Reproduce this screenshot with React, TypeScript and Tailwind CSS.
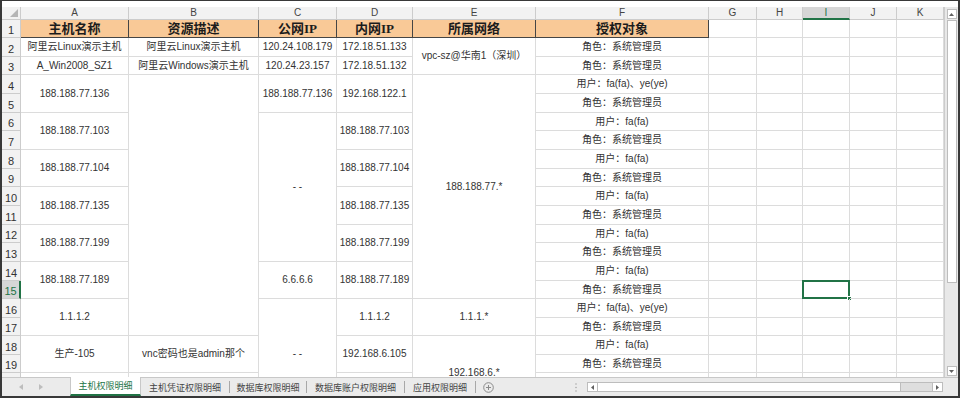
import React from "react";

// literal lookup tables so tailwind sees every class
const ROW = [
  "",
  "row-start-1",
  "row-start-2",
  "row-start-3",
  "row-start-4",
  "row-start-5",
  "row-start-6",
  "row-start-7",
  "row-start-8",
  "row-start-9",
  "row-start-10",
  "row-start-11",
  "row-start-12",
  "row-start-13",
  "row-start-14",
  "row-start-15",
  "row-start-16",
  "row-start-17",
  "row-start-18",
  "row-start-19",
  "row-start-20",
  "row-start-21",
  "row-start-22",
];
const COL = [
  "",
  "col-start-1",
  "col-start-2",
  "col-start-3",
  "col-start-4",
  "col-start-5",
  "col-start-6",
  "col-start-7",
  "col-start-8",
  "col-start-9",
  "col-start-10",
  "col-start-11",
  "col-start-12",
];
const SPAN: Record<number, string> = {
  1: "",
  2: "row-span-2",
  4: "row-span-4",
  6: "row-span-6",
  8: "row-span-8",
  12: "row-span-12",
  14: "row-span-14",
};

type Cell = { c: number; r: number; s: number; t: string };
type Entry = [number, number, string?];

const column = (c: number, list: Entry[]): Cell[] =>
  list.map(([r, s, t]) => ({ c, r, s, t: t ?? "" }));

const ROLE = "角色：系统管理员";
const USER = "用户：fa(fa)";
const USER2 = "用户：fa(fa)、ye(ye)";

// rows 20/21 are cut off by the tab bar, only their top edge shows
const body: Cell[] = [
  ...column(2, [
    [2, 1, "阿里云Linux演示主机"],
    [3, 1, "A_Win2008_SZ1"],
    [4, 2, "188.188.77.136"],
    [6, 2, "188.188.77.103"],
    [8, 2, "188.188.77.104"],
    [10, 2, "188.188.77.135"],
    [12, 2, "188.188.77.199"],
    [14, 2, "188.188.77.189"],
    [16, 2, "1.1.1.2"],
    [18, 2, "生产-105"],
    [20, 1],
    [21, 1],
  ]),
  ...column(3, [
    [2, 1, "阿里云Linux演示主机"],
    [3, 1, "阿里云Windows演示主机"],
    [4, 14],
    [18, 2, "vnc密码也是admin那个"],
    [20, 1],
    [21, 1],
  ]),
  ...column(4, [
    [2, 1, "120.24.108.179"],
    [3, 1, "120.24.23.157"],
    [4, 2, "188.188.77.136"],
    [6, 8, "- -"],
    [14, 2, "6.6.6.6"],
    [16, 6, "- -"],
  ]),
  ...column(5, [
    [2, 1, "172.18.51.133"],
    [3, 1, "172.18.51.132"],
    [4, 2, "192.168.122.1"],
    [6, 2, "188.188.77.103"],
    [8, 2, "188.188.77.104"],
    [10, 2, "188.188.77.135"],
    [12, 2, "188.188.77.199"],
    [14, 2, "188.188.77.189"],
    [16, 2, "1.1.1.2"],
    [18, 2, "192.168.6.105"],
    [20, 1],
    [21, 1],
  ]),
  ...column(6, [
    [2, 2, "vpc-sz@华南1（深圳）"],
    [4, 12, "188.188.77.*"],
    [16, 2, "1.1.1.*"],
    [18, 4, "192.168.6.*"],
  ]),
  ...column(7, [
    [2, 1, ROLE],
    [3, 1, ROLE],
    [4, 1, USER2],
    [5, 1, ROLE],
    [6, 1, USER],
    [7, 1, ROLE],
    [8, 1, USER],
    [9, 1, ROLE],
    [10, 1, USER],
    [11, 1, ROLE],
    [12, 1, USER],
    [13, 1, ROLE],
    [14, 1, USER],
    [15, 1, ROLE],
    [16, 1, USER2],
    [17, 1, ROLE],
    [18, 1, USER],
    [19, 1, ROLE],
    [20, 1],
    [21, 1],
  ]),
];

const HEADS = ["主机名称", "资源描述", "公网IP", "内网IP", "所属网络", "授权对象"];
const LETTERS = ["A", "B", "C", "D", "E", "F", "G", "H", "I", "J", "K"];
const SHEET_ROWS = Array.from({ length: 21 }, (_, i) => i + 1);
const EMPTY_COLS = [8, 9, 10, 11, 12];

const TABS = [
  { name: "主机凭证权限明细", w: "w-[89px]" },
  { name: "数据库权限明细", w: "w-[77px]" },
  { name: "数据库账户权限明细", w: "w-[98px]" },
  { name: "应用权限明细", w: "w-[71px]" },
];

function Sheet() {
  return (
    <div className="grid w-[942px] h-[370px] overflow-hidden grid-cols-[19px_108px_130px_78px_76px_123px_173px_48px_46px_47px_47px_47px] grid-rows-[13px_18px_19px_18px_19px_19px_18px_19px_19px_18px_19px_19px_18px_19px_19px_18px_19px_18px_19px_18px_19px_18px]">
      {/* select-all corner */}
      <div className="col-start-1 row-start-1 relative bg-[#f2f2f2] border-r border-b border-[#cccccc]">
        <svg className="absolute right-[2px] bottom-[2px]" width="8" height="8" viewBox="0 0 8 8">
          <polygon points="8,0 8,8 0,8" fill="#b5b5b5" />
        </svg>
      </div>

      {/* column letters */}
      {LETTERS.map((l, i) => (
        <div
          key={l}
          className={`${COL[i + 2]} row-start-1 flex items-center justify-center text-[10px] leading-none ${
            l === "I"
              ? "bg-[#d6d6d6] text-[#217346] border-r border-[#cccccc] border-b-2 border-b-[#217346]"
              : "bg-[#f2f2f2] text-[#444] border-r border-b border-[#cccccc]"
          }`}
        >
          {l}
        </div>
      ))}

      {/* row numbers */}
      {SHEET_ROWS.map((n) => (
        <div
          key={n}
          className={`col-start-1 ${ROW[n + 1]} flex items-end justify-center text-[11px] leading-[14px] ${
            n === 15
              ? "bg-[#d6d6d6] text-[#217346] border-b border-[#cccccc] border-r-2 border-r-[#217346]"
              : "bg-[#f2f2f2] text-[#333] border-r border-b border-[#cccccc]"
          }`}
        >
          {n < 20 ? n : ""}
        </div>
      ))}

      {/* title row */}
      {HEADS.map((h, i) => (
        <div
          key={h}
          className={`${COL[i + 2]} row-start-2 flex items-center justify-center bg-[#f9c997] border-r border-b border-[#454545] font-['Liberation_Serif','Noto_Sans_CJK_SC',serif] font-bold text-[13px] leading-none text-[#1c1c1c]`}
        >
          {h}
        </div>
      ))}

      {/* data cells */}
      {body.map((cell) => (
        <div
          key={`${cell.c}-${cell.r}`}
          className={`${COL[cell.c]} ${ROW[cell.r + 1]} ${SPAN[cell.s]} flex items-center justify-center border-r border-b border-[#dcdcdc] text-[10px] leading-none text-[#333] whitespace-nowrap`}
        >
          {cell.t}
        </div>
      ))}

      {/* empty columns G..K */}
      {EMPTY_COLS.map((c) =>
        SHEET_ROWS.map((n) => (
          <div
            key={`${c}-${n}`}
            className={`${COL[c]} ${ROW[n + 1]} relative border-r border-b border-[#dcdcdc]`}
          >
            {c === 10 && n === 15 && (
              <>
                <div className="absolute -left-px -top-px -right-px -bottom-px border-2 border-[#217346]" />
                <div className="absolute -right-[3px] -bottom-[3px] w-[5px] h-[5px] bg-[#217346] border border-white" />
              </>
            )}
          </div>
        ))
      )}
    </div>
  );
}

function VScroll() {
  return (
    <div className="w-[14px] h-[370px] bg-[#e8e8e8] border-l border-[#cccccc] flex flex-col items-center pt-[2px] pb-[1px]">
      <div className="w-[10px] h-[10px] bg-white border border-[#bdbdbd] flex items-center justify-center">
        <svg width="5" height="3" viewBox="0 0 5 3">
          <polygon points="2.5,0 5,3 0,3" fill="#606060" />
        </svg>
      </div>
      <div className="w-[10px] h-[263px] mt-[1px] bg-white border border-[#bdbdbd]" />
      <div className="mt-auto w-[10px] h-[10px] bg-white border border-[#bdbdbd] flex items-center justify-center">
        <svg width="5" height="3" viewBox="0 0 5 3">
          <polygon points="0,0 5,0 2.5,3" fill="#606060" />
        </svg>
      </div>
    </div>
  );
}

function TabBar() {
  return (
    <div className="h-[19px] shrink-0 flex items-stretch bg-[#ebebeb] border-t border-[#c8c8c8] font-['Noto_Sans_CJK_SC',sans-serif] text-[9px] leading-none text-[#444]">
      <div className="w-[68px] flex items-center gap-[16px] pl-[17px]">
        <svg width="4" height="6" viewBox="0 0 4 6">
          <polygon points="4,0 4,6 0,3" fill="#bdbdbd" />
        </svg>
        <svg width="4" height="6" viewBox="0 0 4 6">
          <polygon points="0,0 4,3 0,6" fill="#bdbdbd" />
        </svg>
      </div>
      <div className="w-[71px] -mt-px flex items-center justify-center bg-white border-l border-r border-[#c8c8c8] border-b-2 border-b-[#217346] text-[#217346]">
        主机权限明细
      </div>
      {TABS.map((t) => (
        <div key={t.name} className={`${t.w} flex items-center`}>
          <span className="flex-1 text-center">{t.name}</span>
          <span className="w-px h-[12px] bg-[#a8a8a8]" />
        </div>
      ))}
      <div className="w-[24px] flex items-center justify-center">
        <svg width="11" height="11" viewBox="0 0 11 11">
          <circle cx="5.5" cy="5.5" r="4.8" fill="none" stroke="#8a8a8a" strokeWidth="1" />
          <path d="M5.5 3v5M3 5.5h5" stroke="#8a8a8a" strokeWidth="1" />
        </svg>
      </div>
      <div className="w-[70px]" />
      <div className="w-[12px] flex items-center justify-center">
        <svg width="2" height="9" viewBox="0 0 2 9">
          <circle cx="1" cy="1" r="0.8" fill="#a8a8a8" />
          <circle cx="1" cy="4.5" r="0.8" fill="#a8a8a8" />
          <circle cx="1" cy="8" r="0.8" fill="#a8a8a8" />
        </svg>
      </div>
      <div className="w-[5px]" />
      <div className="w-[356px] flex items-center">
        <div className="w-full h-[10px] flex border border-[#bdbdbd] bg-[#dedede]">
          <div className="w-[10px] bg-white border-r border-[#bdbdbd] flex items-center justify-center">
            <svg width="3" height="5" viewBox="0 0 3 5">
              <polygon points="3,0 3,5 0,2.5" fill="#606060" />
            </svg>
          </div>
          <div className="w-[303px] bg-white border-r border-[#bdbdbd]" />
          <div className="flex-1" />
          <div className="w-[10px] bg-white border-l border-[#bdbdbd] flex items-center justify-center">
            <svg width="3" height="5" viewBox="0 0 3 5">
              <polygon points="0,0 3,2.5 0,5" fill="#606060" />
            </svg>
          </div>
        </div>
      </div>
    </div>
  );
}

export default function App() {
  return (
    <div className="w-[960px] h-[398px] overflow-hidden bg-white border-t border-l-2 border-r-2 border-b-2 border-[#383838] flex flex-col font-['Liberation_Sans','Noto_Sans_CJK_SC',sans-serif]">
      <div className="h-[6px] shrink-0 bg-white" />
      <div className="flex h-[370px] shrink-0">
        <Sheet />
        <VScroll />
      </div>
      <TabBar />
    </div>
  );
}
